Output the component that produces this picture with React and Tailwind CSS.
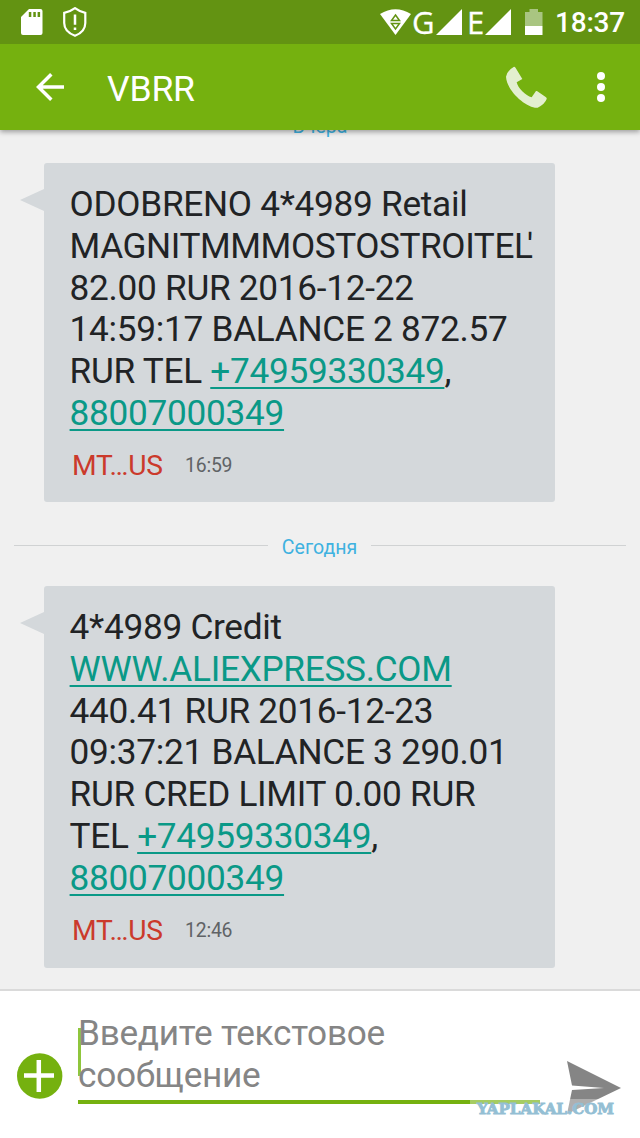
const Link = ({ children }) => (
  <a className="text-[#0a9987] underline decoration-[#0a9987] decoration-[2px] underline-offset-[4px]">{children}</a>
);

function StatusBar() {
  return (
    <div className="relative z-20 flex h-11 shrink-0 items-center bg-[#639312] pl-[21px] pr-[15px] text-white">
      <svg className="mr-[20px] h-[26px] w-[22px]" viewBox="0 0 22 26" fill="currentColor">
        <path
          fillRule="evenodd"
          d="M8 0H19.5Q21.500 0 21.500 2V24Q21.500 26 19.500 26H2Q0 26 0 24V8ZM7.800 3V8H10.300V3ZM12.300 3V8H14.800V3ZM16.600 3V8H19.100V3Z"
        />
      </svg>
      <svg className="h-[30px] w-[24px]" viewBox="0 0 24 30" fill="none" stroke="currentColor">
        <path d="M12 1.200C9 3.500 5.500 5 1.200 5.800V16C1.200 22 6 26.500 12 28.800C18 26.500 22.300 22 22.300 16V5.800C18 5 15 3.500 12 1.200Z" strokeWidth="2.200" />
        <path d="M12 7.500V17.800M12 20.500V22.900" strokeWidth="2.500" />
      </svg>
      <div className="flex-1" />
      <svg className="h-[26px] w-[31px]" viewBox="0 0 31 26">
        <path d="M0 5Q15.500-4.500 31 5L15.500 26Z" fill="white" />
        <path d="M15.500 6L19.500 11.500H11.500ZM11.500 14.500H19.500L15.500 20Z" fill="none" stroke="#639312" strokeWidth="1.500" />
      </svg>
      <span className="ml-[1px] w-[22px] font-['Open_Sans',sans-serif] text-[31px] leading-none [-webkit-text-stroke:0.300px_white]">G</span>
      <svg className="ml-[2px] h-[26px] w-[26px]" viewBox="0 0 26 26">
        <path d="M0 26L26 0V26Z" fill="white" />
      </svg>
      <span className="ml-[5px] w-[17px] font-['Open_Sans',sans-serif] text-[31px] leading-none [-webkit-text-stroke:0.300px_white]">E</span>
      <svg className="ml-[1px] h-[26px] w-[26px]" viewBox="0 0 26 26">
        <path d="M0 26L26 0V26Z" fill="white" />
      </svg>
      <svg className="ml-[14px] mr-[12px] h-[26px] w-[18px]" viewBox="0 0 18 26">
        <path d="M0 3H4.500V0H13V3H17.500V17H0Z" fill="#a9c581" />
        <path d="M0 17H17.500V26H0Z" fill="white" />
      </svg>
      <span className="w-[70px] whitespace-nowrap pt-[2px] text-[28px] font-medium leading-none tracking-[-0.200px]">18:37</span>
    </div>
  );
}

function AppBar() {
  return (
    <header className="relative z-10 flex h-[86px] shrink-0 items-center bg-[#75b10f] pl-[36px] text-white shadow-[0_2px_5px_rgba(0,0,0,0.35)]">
      <svg className="h-[28px] w-[28px]" viewBox="0 0 28 28" fill="none" stroke="currentColor" strokeWidth="3.500">
        <path d="M28 14H2.500M15.300 1.300L2.500 14L15.300 26.700" />
      </svg>
      <h1 className="ml-[43px] mt-[5px] flex-1 text-[35.560px] leading-none tracking-[-0.200px]">VBRR</h1>
      <svg className="mr-[50px] h-[42px] w-[42px]" viewBox="0 0 126 126" fill="#e3efcf">
        <path d="M27 2Q30 2 32 6L52 39L35 49C38 65 62 90 80 94L93 75Q95 74 97 76L122 93Q126 96 125 99Q120 114 98 125C66 128 5 75 3 32Q8 12 27 2Z" />
      </svg>
      <svg className="mr-[35px] h-[30px] w-[8px]" viewBox="0 0 8 30" fill="currentColor">
        <circle cx="4" cy="4" r="4" />
        <circle cx="4" cy="15" r="4" />
        <circle cx="4" cy="26" r="4" />
      </svg>
    </header>
  );
}

function Bubble({ time, height, children }) {
  return (
    <article className={"relative ml-[44px] w-[511px] shrink-0 rounded-[3px] bg-[#d4d8db] pl-[25.600px] pt-[21px] " + height}>
      <svg className="absolute left-[-24px] top-[26px] h-[22px] w-[24px]" viewBox="0 0 24 22">
        <path d="M24 0V22L0 11Z" fill="#d4d8db" />
      </svg>
      <p className="whitespace-nowrap text-[35.200px] leading-[41.780px] tracking-[-0.280px] text-[#212325]">{children}</p>
      <div className="flex items-center pl-[2.400px] pt-[14.500px]">
        <span className="w-[113px] text-[28.200px] leading-[34px] tracking-[-0.200px] text-[#cb3a2b]">MT…US</span>
        <time className="text-[19.400px] leading-[34px] tracking-[-0.200px] text-[#606366]">{time}</time>
      </div>
    </article>
  );
}

function Composer() {
  return (
    <footer className="relative flex h-[149px] shrink-0 border-t-2 border-[#dadada] bg-white">
      <svg className="ml-[17px] mt-[62px] h-[46px] w-[46px]" viewBox="0 0 46 46">
        <circle cx="22.700" cy="23" r="22.700" fill="#75b10f" />
        <path d="M7 22.500H37M21.800 7V39" stroke="white" strokeWidth="4.500" />
      </svg>
      <div className="relative ml-[15px] mt-[22px] h-[91px] w-[462px] border-b-[4px] border-[#75b10f]">
        <span className="absolute left-0 top-[15px] h-[48px] w-[3px] bg-[#8fc63c]" />
        <p className="relative text-[35.200px] leading-[41.780px] tracking-[-0.280px] text-[#858585]">
          Введите текстовое
          <br />
          сообщение
        </p>
      </div>
      <svg className="ml-[27px] mt-[70px] h-[54px] w-[54px]" viewBox="0 0 54 54">
        <path d="M0 0L54 27L0 53L5 29L37 27L5 24.500Z" fill="#858585" />
      </svg>
      <div className="absolute left-[470px] top-[108px] h-[17px] w-[153px] bg-white/35" />
      <svg className="absolute left-[476px] top-[105px] h-[24px] w-[140px]" viewBox="0 0 140 24">
        <text x="1" y="18" textLength="137" lengthAdjust="spacingAndGlyphs" fontFamily="DejaVu Serif, serif" fontWeight="700" fontSize="15" fill="#94bfd4" stroke="#94bfd4" strokeWidth="0.900">
          YAPLAKAL.COM
        </text>
      </svg>
    </footer>
  );
}

export default function App() {
  return (
    <div className="flex h-[1138px] w-[640px] flex-col overflow-hidden bg-[#f0f0f0] font-[Roboto,sans-serif]">
      <StatusBar />
      <AppBar />
      <main className="flex flex-1 flex-col">
        <div className="-mt-[15px] mb-[25px] flex h-[23px] justify-center text-[19.560px] leading-[23px] text-[#3fb2e0]">Вчера</div>
        <Bubble time="16:59" height="h-[339px]">
          ODOBRENO 4*4989 Retail
          <br />
          <span className="tracking-[-0.420px]">
            MAGNITMMMOSTOSTROITE<span className="tracking-[-6px]">L'</span>
          </span>
          <br />
          82.00 RUR 2016-12-22
          <br />
          14:59:17 BALANCE 2 872.57
          <br />
          RUR TEL <Link>+74959330349</Link>,
          <br />
          <Link>88007000349</Link>
        </Bubble>
        <div className="flex h-[84px] shrink-0 items-center px-[14px] pt-[2px]">
          <div className="h-px w-[254px] bg-[#d0d2d3]" />
          <span className="flex-1 pt-[5px] text-center text-[19.560px] leading-[23px] text-[#3fb2e0]">Сегодня</span>
          <div className="h-px w-[255px] bg-[#d0d2d3]" />
        </div>
        <Bubble time="12:46" height="h-[382px]">
          4*4989 Credit
          <br />
          <Link>WWW.ALIEXPRESS.COM</Link>
          <br />
          440.41 RUR 2016-12-23
          <br />
          09:37:21 BALANCE 3 290.01
          <br />
          RUR CRED LIMIT 0.00 RUR
          <br />
          TEL <Link>+74959330349</Link>,
          <br />
          <Link>88007000349</Link>
        </Bubble>
      </main>
      <Composer />
    </div>
  );
}
